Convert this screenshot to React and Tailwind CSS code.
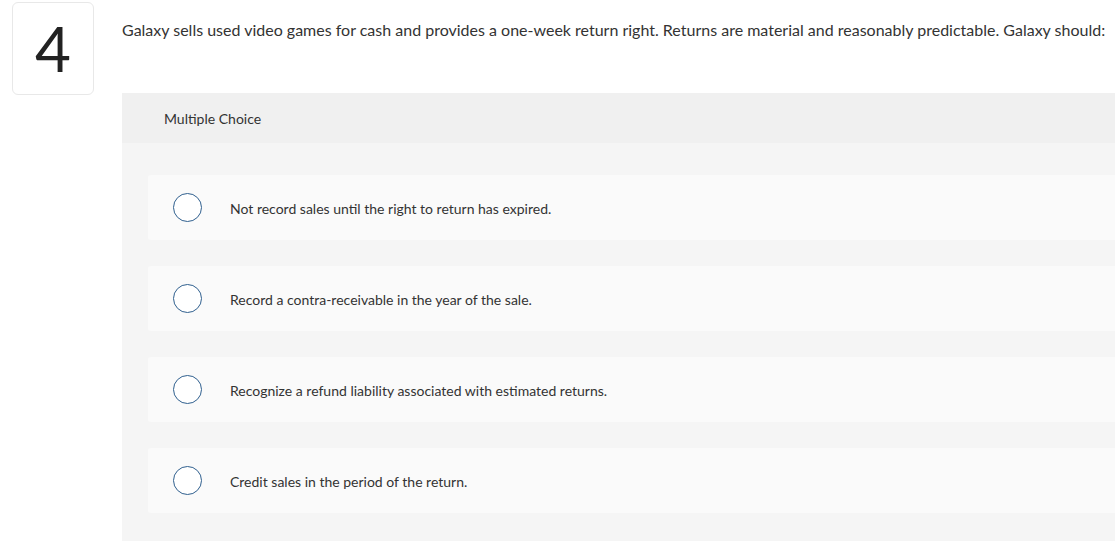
const choices = [
  "Not record sales until the right to return has expired.",
  "Record a contra-receivable in the year of the sale.",
  "Recognize a refund liability associated with estimated returns.",
  "Credit sales in the period of the return.",
];

export default function App() {
  return (
    <div
      className="w-[1115px] h-[541px] overflow-hidden bg-white flex text-[#222]"
      style={{ fontFamily: "Lato, 'Open Sans', sans-serif" }}
    >
      <div className="w-[122px] shrink-0 pl-3 pt-[2px]">
        <div className="w-[82px] h-[93px] rounded-md border border-[#e8e8e8] flex items-center justify-center">
          <span className="text-[62px] font-normal leading-none text-[#222] -mt-[2px]">4</span>
        </div>
      </div>

      <div className="flex-1 min-w-0 flex flex-col">
        <p className="mt-[20px] h-[73px] text-[16px] leading-[20px] whitespace-nowrap text-[#333]">
          Galaxy sells used video games for cash and provides a one-week return right. Returns are material and reasonably predictable. Galaxy should:
        </p>

        <div className="flex-1 bg-[#f5f5f5] flex flex-col">
          <div className="h-[50px] bg-[#f0f0f0] flex items-center pl-[42px] text-[14px] text-[#333]">
            Multiple Choice
          </div>
          <div className="flex flex-col gap-[26px] pt-[32px] pl-[26px]">
            {choices.map((c) => (
              <div key={c} className="h-[65px] bg-[#fafafa] rounded-l-[3px] flex items-center">
                <span className="ml-[25px] w-[29px] h-[29px] rounded-full border-[1.5px] border-[#2f5f8e] bg-white shrink-0" />
                <span className="ml-[28px] pt-[1px] text-[14px] text-[#333]">{c}</span>
              </div>
            ))}
          </div>
        </div>
      </div>
    </div>
  );
}
